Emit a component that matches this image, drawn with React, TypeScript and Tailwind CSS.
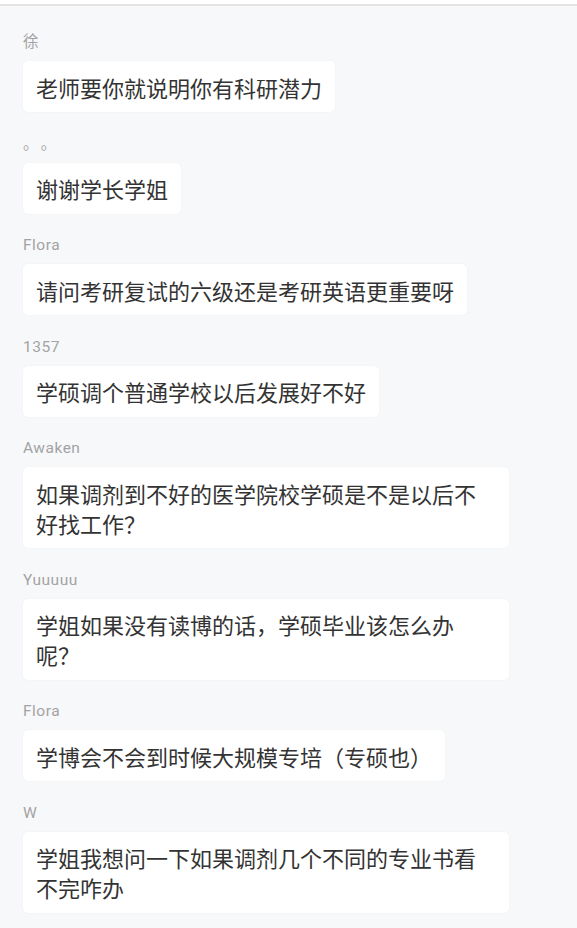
const messages = [
    { name: "徐", text: "老师要你就说明你有科研潜力" },
    { name: "。。", text: "谢谢学长学姐" },
    { name: "Flora", text: "请问考研复试的六级还是考研英语更重要呀" },
    { name: "1357", text: "学硕调个普通学校以后发展好不好" },
    { name: "Awaken", text: "如果调剂到不好的医学院校学硕是不是以后不好找工作？" },
    { name: "Yuuuuu", text: "学姐如果没有读博的话，学硕毕业该怎么办呢？" },
    { name: "Flora", text: "学博会不会到时候大规模专培（专硕也）" },
    { name: "W", text: "学姐我想问一下如果调剂几个不同的专业书看不完咋办" },
];

export default function App() {
    return (
        <div
            className="min-h-screen bg-[#f7f8fa]"
            style={{ fontFamily: '"Noto Sans CJK SC", sans-serif' }}
        >
            <div className="h-[6px] bg-white border-b-2 border-[#e4e4e4]" />

            <div className="flex flex-col gap-[21.5px] pl-[23px] pt-[26px] pb-[13px]">
                {messages.map((m, i) => (
                    <div key={i} className="flex flex-col items-start">
                        <div
                            className={
                                m.name === "。。"
                                    ? "text-[15.5px] leading-5 text-[#a3a3a3] mb-[9px] tracking-[10px]"
                                    : "text-[15.5px] leading-5 text-[#a3a3a3] mb-[9px] tracking-[0.5px]"
                            }
                            style={{ fontFamily: 'Roboto, "Noto Sans CJK SC", sans-serif' }}
                        >
                            {m.name}
                        </div>
                        <div className="max-w-[486px] bg-white rounded-[5px] px-[13px] py-[10.5px] text-[22px] leading-[30px] text-[#333333] shadow-[0_0_2px_rgba(0,0,0,0.05)]">
                            {m.text}
                        </div>
                    </div>
                ))}
            </div>
        </div>
    );
}
